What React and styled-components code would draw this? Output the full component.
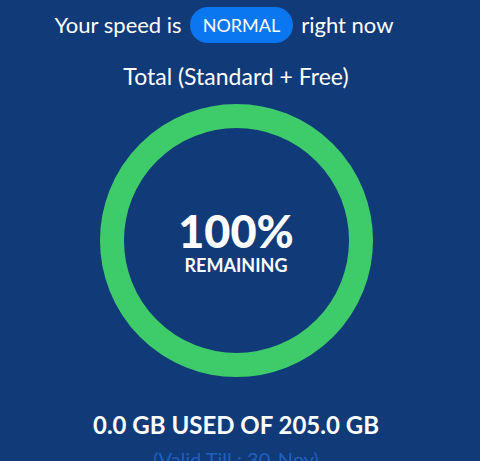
import React from "react";
import styled, { createGlobalStyle } from "styled-components";

const GlobalStyle = createGlobalStyle`
	html, body {
		margin: 0;
		padding: 0;
		background: #113a78;
		overflow: hidden;
	}
	body {
		font-family: Lato, "Open Sans", sans-serif;
		color: #ffffff;
	}
`;

const Page = styled.main`
	display: flex;
	flex-direction: column;
	align-items: center;
	width: 472px;
	& > * {
		flex-shrink: 0;
	}
`;

const SpeedRow = styled.div`
	display: flex;
	align-items: center;
	gap: 8px;
	margin-top: 7px;
	margin-right: 24px;
	font-size: 22px;
	line-height: 36px;
	white-space: nowrap;
`;

const Badge = styled.span`
	display: inline-flex;
	align-items: center;
	justify-content: center;
	height: 36px;
	padding: 0 13px;
	border-radius: 18px;
	background: #0a76f0;
	font-size: 18px;
	color: #ffffff;
`;

const Caption = styled.div`
	margin-top: 19px;
	font-size: 23px;
	line-height: 28px;
	white-space: nowrap;
`;

const Ring = styled.div`
	position: relative;
	width: 273px;
	height: 273px;
	margin-top: 14px;
	display: flex;
	flex-direction: column;
	align-items: center;
	justify-content: center;
	svg {
		position: absolute;
		inset: 0;
	}
`;

const Percent = styled.div`
	position: relative;
	font-size: 45px;
	font-weight: 900;
	line-height: 48px;
`;

const Label = styled.div`
	position: relative;
	font-size: 18px;
	font-weight: 700;
	line-height: 20px;
`;

const Usage = styled.div`
	margin-top: 33px;
	font-size: 24px;
	font-weight: 700;
	line-height: 30px;
	white-space: nowrap;
`;

const Valid = styled.div`
	margin-top: 7px;
	font-size: 20px;
	line-height: 24px;
	color: #1f5fbf;
	white-space: nowrap;
`;

const ProgressRing = ({ size, stroke, value }) => {
	const r = (size - stroke) / 2;
	const c = 2 * Math.PI * r;
	return (
		<svg width={size} height={size} viewBox={`0 0 ${size} ${size}`}>
			<circle
				cx={size / 2}
				cy={size / 2}
				r={r}
				fill="none"
				stroke="#3ecc6a"
				strokeWidth={stroke}
				strokeDasharray={c}
				strokeDashoffset={c * (1 - value / 100)}
				transform={`rotate(-90 ${size / 2} ${size / 2})`}
			/>
		</svg>
	);
};

const App = () => {
	return (
		<Page>
			<GlobalStyle />
			<SpeedRow>
				<span>Your speed is</span>
				<Badge>NORMAL</Badge>
				<span>right now</span>
			</SpeedRow>
			<Caption>Total (Standard + Free)</Caption>
			<Ring>
				<ProgressRing size={273} stroke={24} value={100} />
				<Percent>100%</Percent>
				<Label>REMAINING</Label>
			</Ring>
			<Usage>0.0 GB USED OF 205.0 GB</Usage>
			<Valid>(Valid Till : 30-Nov)</Valid>
		</Page>
	);
};

export default App;
